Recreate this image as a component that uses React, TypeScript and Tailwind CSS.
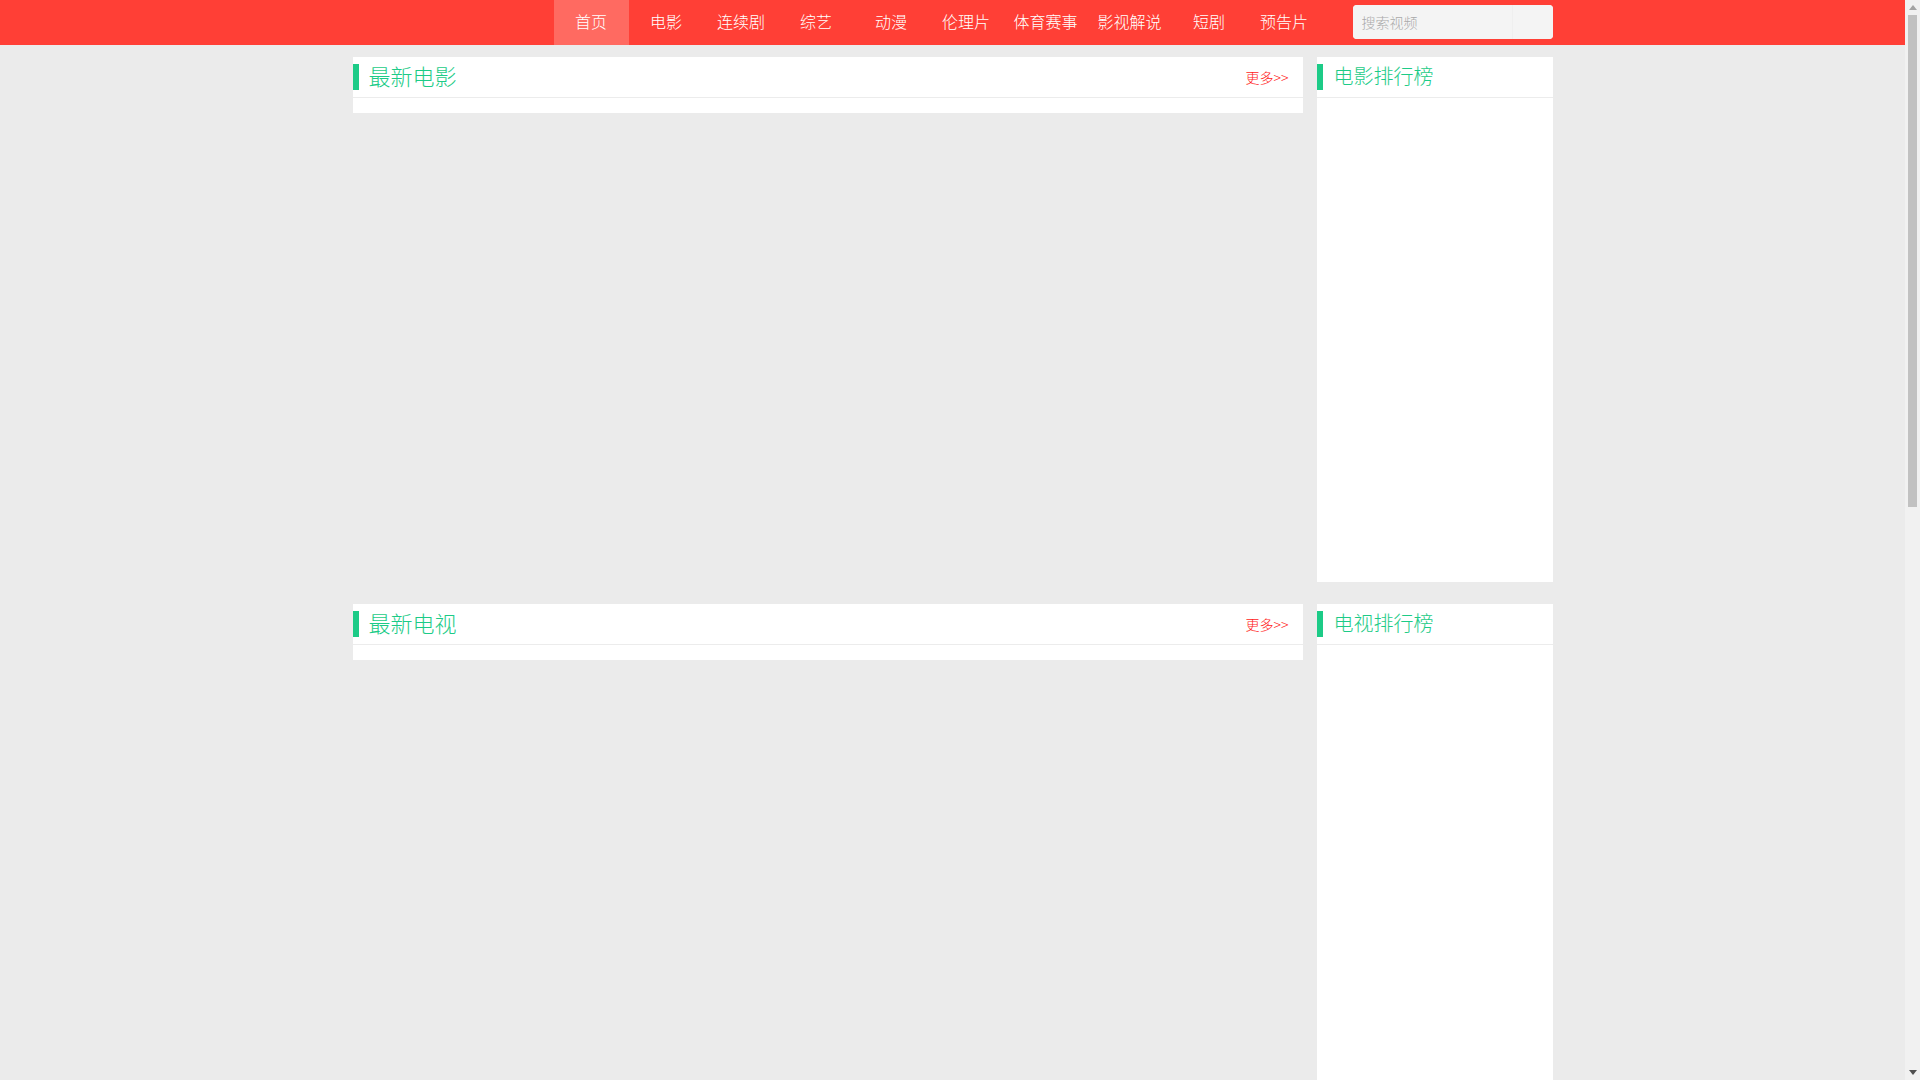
import React from "react";

const navItems = ["首页", "电影", "连续剧", "综艺", "动漫", "伦理片", "体育赛事", "影视解说", "短剧", "预告片"];

const sections = [
  { title: "最新电影", rank: "电影排行榜" },
  { title: "最新电视", rank: "电视排行榜" },
  { title: "最新综艺", rank: "综艺排行榜" },
  { title: "最新动漫", rank: "动漫排行榜" },
];

function PanelHead({ title, big, more }: { title: string; big?: boolean; more?: boolean }) {
  return (
    <div className="h-[41px] border-b border-[#ececec] flex items-center">
      <span className="w-[6px] h-[26px] bg-[#1ccb87] shrink-0" />
      <h2
        className={
          big
            ? "ml-[10px] pb-[5px] text-[22px] leading-[26px] font-light text-[#1ccb87]"
            : "ml-[11px] pb-[3px] text-[20px] leading-[26px] font-light text-[#1ccb87]"
        }
      >
        {title}
      </h2>
      {more && (
        <a href="#" className="ml-auto mr-[14px] pb-[1px] text-[14px] leading-[20px] font-light text-[#ff1a1a]">
          更多&gt;&gt;
        </a>
      )}
    </div>
  );
}

function Scrollbar() {
  return (
    <div className="w-[15px] h-full shrink-0 bg-[#f1f1f1] flex flex-col items-center">
      <div className="h-[15px] w-full flex items-center justify-center">
        <svg width="8" height="5" viewBox="0 0 8 5">
          <path d="M4 0 L8 5 L0 5 Z" fill="#a3a3a3" />
        </svg>
      </div>
      <div className="w-[9px] h-[492px] bg-[#c1c1c1]" />
      <div className="flex-1" />
      <div className="h-[15px] w-full flex items-center justify-center">
        <svg width="8" height="5" viewBox="0 0 8 5">
          <path d="M0 0 L8 0 L4 5 Z" fill="#505050" />
        </svg>
      </div>
    </div>
  );
}

export default function App() {
  return (
    <div className="h-screen flex overflow-hidden bg-[#ebebeb] font-['Noto_Sans_CJK_SC','Noto_Sans',sans-serif]">
      <div className="flex-1 h-full overflow-hidden">
        <header className="h-[45px] bg-[#ff3f36]">
          <div className="w-[1200px] mx-auto h-full flex">
            <div className="w-[201px] shrink-0" />
            <nav className="flex h-full">
              {navItems.map((item, i) => (
                <a
                  key={item}
                  href="#"
                  className={
                    i === 0
                      ? "h-full min-w-[75px] px-[10px] pb-[3px] flex items-center justify-center text-[16px] font-light text-white bg-[#ff6a61]"
                      : "h-full min-w-[75px] px-[10px] pb-[3px] flex items-center justify-center text-[16px] font-light text-white"
                  }
                >
                  {item}
                </a>
              ))}
            </nav>
            <form className="ml-auto mt-[5px] h-[34px] w-[200px] flex rounded-[4px] overflow-hidden bg-[#f4f4f4]">
              <input
                type="text"
                placeholder="搜索视频"
                className="w-[159px] h-full bg-[#f4f4f4] pl-[9px] pb-[1px] text-[14px] font-light text-[#555] placeholder:text-[#a9a9a9] outline-none"
              />
              <button type="button" className="w-[41px] h-full bg-[#f4f4f4] border-l border-[#efefef]" />
            </form>
          </div>
        </header>

        <main className="w-[1200px] mx-auto pt-[12px] pb-[20px] flex flex-col gap-[22px]">
          {sections.map((s) => (
            <div key={s.title} className="flex justify-between items-start">
              <section className="w-[950px] bg-white">
                <PanelHead title={s.title} big more />
                <div className="h-[15px]" />
              </section>
              <aside className="w-[236px] h-[525px] bg-white">
                <PanelHead title={s.rank} />
              </aside>
            </div>
          ))}
        </main>
      </div>
      <Scrollbar />
    </div>
  );
}
